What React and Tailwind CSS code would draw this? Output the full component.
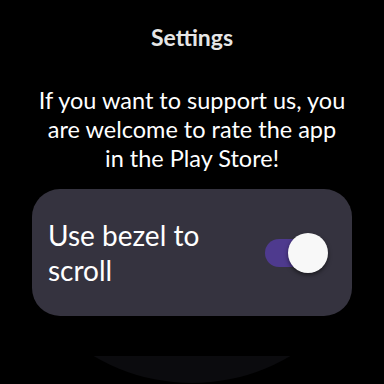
export default function App() {
  return (
    <div className="w-[384px] h-[384px] bg-black overflow-hidden flex flex-col items-center" style={{ fontFamily: "Lato, 'Noto Sans', sans-serif" }}>
      <div className="pt-[23px] text-[23px] leading-[28px] font-bold text-[#e6e6e6]">Settings</div>
      <div className="mt-[35px] text-center text-white text-[23.5px] leading-[29px] w-[340px]">
        If you want to support us, you<br />are welcome to rate the app<br />in the Play Store!
      </div>
      <div className="mt-[16px] w-[320px] h-[127px] shrink-0 rounded-[28px] bg-[#35333f] flex items-center justify-between pl-[16px] pr-[24px]">
        <div className="text-white text-[28px] leading-[35px] w-[200px]">Use bezel to scroll</div>
        <div className="relative w-[63px] h-[40px] shrink-0">
          <div className="absolute left-0 top-[6px] w-[52px] h-[28px] rounded-full bg-[#4e3a8e]"></div>
          <div className="absolute right-0 top-0 w-[40px] h-[40px] rounded-full bg-[#f8f8f8] shadow-[0_2px_4px_rgba(0,0,0,0.5)]"></div>
        </div>
      </div>
      <div className="mt-[40px] w-[384px] h-[40px] shrink-0 [clip-path:circle(192px_at_192px_-165px)] bg-[#0b0b0e]"></div>
    </div>
  );
}
